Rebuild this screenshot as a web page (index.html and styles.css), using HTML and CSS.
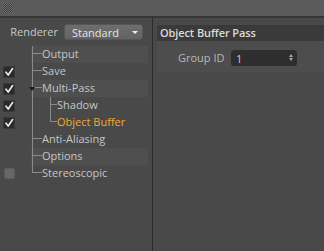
FILE: index.html
```html
<!DOCTYPE html>
<html>
<head>
<meta charset="utf-8">
<link rel="stylesheet" href="styles.css">
</head>
<body>
<div class="topbar"><div class="grip"></div></div>
<div class="main">
  <div class="left">
    <div class="renderer">
      <span class="rlabel">Renderer</span>
      <div class="dropdown"><span>Standard</span><span class="darrow"></span></div>
    </div>
    <div class="tree">
      <div class="row">
        <div class="chk-cell"></div>
        <div class="item alt"><span class="g v t"></span><span class="txt">Output</span></div>
      </div>
      <div class="row">
        <div class="chk-cell"><span class="chk"><svg width="12" height="12" viewBox="0 0 12 12"><path d="M3 6.2 L5.2 9 L9.6 2.6" fill="none" stroke="#ececec" stroke-width="1.7" stroke-linecap="round" stroke-linejoin="round"/></svg></span></div>
        <div class="item"><span class="g v t"></span><span class="txt">Save</span></div>
      </div>
      <div class="row">
        <div class="chk-cell"><span class="chk"><svg width="12" height="12" viewBox="0 0 12 12"><path d="M3 6.2 L5.2 9 L9.6 2.6" fill="none" stroke="#ececec" stroke-width="1.7" stroke-linecap="round" stroke-linejoin="round"/></svg></span></div>
        <div class="item alt"><span class="g v t open"></span><span class="txt">Multi-Pass</span></div>
      </div>
      <div class="row">
        <div class="chk-cell"><span class="chk"><svg width="12" height="12" viewBox="0 0 12 12"><path d="M3 6.2 L5.2 9 L9.6 2.6" fill="none" stroke="#ececec" stroke-width="1.7" stroke-linecap="round" stroke-linejoin="round"/></svg></span></div>
        <div class="item"><span class="g v"></span><span class="g2 v t"></span><span class="txt">Shadow</span></div>
      </div>
      <div class="row">
        <div class="chk-cell"><span class="chk"><svg width="12" height="12" viewBox="0 0 12 12"><path d="M3 6.2 L5.2 9 L9.6 2.6" fill="none" stroke="#ececec" stroke-width="1.7" stroke-linecap="round" stroke-linejoin="round"/></svg></span></div>
        <div class="item"><span class="g v"></span><span class="g2 v t last"></span><span class="txt sel">Object Buffer</span></div>
      </div>
      <div class="row">
        <div class="chk-cell"></div>
        <div class="item"><span class="g v t"></span><span class="txt">Anti-Aliasing</span></div>
      </div>
      <div class="row">
        <div class="chk-cell"></div>
        <div class="item alt"><span class="g v t"></span><span class="txt">Options</span></div>
      </div>
      <div class="row">
        <div class="chk-cell"><span class="chk off"></span></div>
        <div class="item"><span class="g v t last"></span><span class="txt">Stereoscopic</span></div>
      </div>
    </div>
  </div>
  <div class="divider"></div>
  <div class="right">
    <div class="phead">Object Buffer Pass</div>
    <div class="pbody">
      <span class="flabel">Group ID</span>
      <div class="num"><span>1</span><span class="spin"><i class="up"></i><i class="dn"></i></span></div>
    </div>
  </div>
</div>
</body>
</html>
```

FILE: styles.css
```css
html, body {
  margin: 0;
  padding: 0;
}
body {
  width: 324px;
  height: 251px;
  overflow: hidden;
  background: #494949;
  font-family: "Open Sans", "Noto Sans", sans-serif;
  font-size: 11px;
  color: #c6c6c6;
}
.topbar {
  height: 16px;
  background: #5b5b5b;
  border-bottom: 2px solid #363636;
  padding: 3px 0 0 3px;
  box-sizing: content-box;
  height: 13px;
}
.grip {
  width: 10px;
  height: 10px;
  background-color: #5b5b5b;
  background-image: repeating-conic-gradient(#3f3f3f 0 25%, #6f6f6f 0 50%);
  background-size: 2px 2px;
}
.main {
  display: flex;
  height: 233px;
}
.left {
  width: 152px;
  background: #494949;
}
.divider {
  width: 1px;
  background: #2c2c2c;
}
.right {
  flex: 1;
  padding: 7px 0 0 4px;
  background: #494949;
}
.renderer {
  display: flex;
  align-items: center;
  height: 16px;
  margin-top: 6px;
}
.rlabel {
  width: 58px;
  text-align: right;
  color: #c8c8c8;
  line-height: 16px;
}
.dropdown {
  margin-left: 6px;
  width: 79px;
  height: 16px;
  box-sizing: border-box;
  border-radius: 3px;
  background: linear-gradient(#6e6e6e, #636363);
  border: 1px solid #565656;
  display: flex;
  align-items: center;
  padding-left: 7px;
  color: #e4e4e4;
  position: relative;
}
.darrow {
  position: absolute;
  right: 4px;
  top: 6px;
  width: 0;
  height: 0;
  border-left: 3px solid transparent;
  border-right: 3px solid transparent;
  border-top: 3px solid #f0f0f0;
}
.tree {
  margin-top: 6px;
}
.row {
  display: flex;
  height: 17px;
}
.chk-cell {
  width: 31px;
  display: flex;
  align-items: center;
  padding-left: 3px;
  box-sizing: border-box;
}
.chk {
  width: 12px;
  height: 12px;
  border-radius: 2px;
  background: #2a2a2a;
  box-shadow: inset 0 0 0 1px #3a3a3a;
  display: block;
}
.chk svg {
  display: block;
}
.chk.off {
  background: #676767;
  box-shadow: inset 0 0 0 1px #5c5c5c;
  border-radius: 3px;
  width: 11px;
  height: 11px;
  margin-left: 1px;
}
.item {
  flex: 1;
  margin-right: 4px;
  display: flex;
  align-items: stretch;
}
.item.alt {
  background: #4f4f4f;
}
.g, .g2 {
  position: relative;
  flex: none;
}
.g { width: 11px; }
.g2 { width: 15px; }
.g.v::before, .g2.v::before {
  content: "";
  position: absolute;
  top: 0;
  bottom: 0;
  width: 1px;
  background: #8a8a8a;
}
.g.v::before { left: 1px; }
.g2.v::before { left: 8px; }
.g.last::before, .g2.last::before { bottom: 9px; }
.g.t::after, .g2.t::after {
  content: "";
  position: absolute;
  top: 7px;
  height: 1px;
  background: #8a8a8a;
}
.g.t::after { left: 2px; width: 9px; }
.g2.t::after { left: 9px; width: 6px; }
.g.open::after {
  width: 9px;
}
.g.open {
  background: none;
}
.g.open .tri { display: none; }
.item .txt {
  line-height: 15px;
  white-space: nowrap;
}
.txt.sel {
  color: #f2a833;
}
.g.open::before {
  box-shadow: none;
}
.right .phead {
  height: 16px;
  background: #3a3a3a;
  color: #dadada;
  padding-left: 3px;
  line-height: 16px;
  font-weight: 600;
  letter-spacing: -0.1px;
}
.pbody {
  background: #4d4d4d;
  height: 31px;
  box-sizing: border-box;
  padding: 9px 0 0 21px;
  display: flex;
  align-items: flex-start;
}
.flabel {
  line-height: 16px;
  color: #b8b8b8;
  width: 48px;
}
.num {
  margin-left: 5px;
  width: 66px;
  height: 16px;
  box-sizing: border-box;
  background: #2e2e2e;
  border-radius: 3px;
  display: flex;
  align-items: center;
  padding-left: 5px;
  color: #cfcfcf;
  position: relative;
}
.spin {
  position: absolute;
  right: 4px;
  top: 4px;
  display: flex;
  flex-direction: column;
  gap: 1px;
}
.spin i {
  display: block;
  width: 0;
  height: 0;
  border-left: 2.5px solid transparent;
  border-right: 2.5px solid transparent;
}
.spin .up { border-bottom: 3px solid #a8a8a8; }
.spin .dn { border-top: 3px solid #a8a8a8; }
.tree .row:nth-child(3) .g.open {
  overflow: visible;
}
.tree .row:nth-child(3) .item {
  position: relative;
}
.tree .row:nth-child(3) .item::before {
  content: "";
  position: absolute;
  left: -2px;
  top: 7px;
  width: 0;
  height: 0;
  border-left: 3px solid transparent;
  border-right: 3px solid transparent;
  border-top: 4px solid #1c1c1c;
  z-index: 1;
}
```
